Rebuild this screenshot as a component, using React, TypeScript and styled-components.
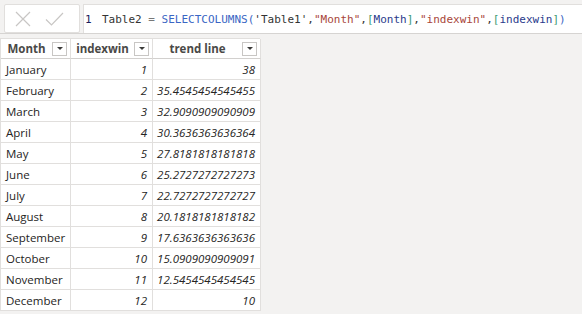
import React from "react";
import styled, { createGlobalStyle } from "styled-components";

const Global = createGlobalStyle`
  html, body { margin: 0; padding: 0; background: #f3f2f1; }
  body { width: 582px; height: 314px; overflow: hidden; font-family: "Open Sans", "Noto Sans", sans-serif; }
`;

const Page = styled.div`
  display: flex;
  flex-direction: column;
  gap: 4px;
`;

const FormulaBar = styled.div`
  display: flex;
  gap: 3px;
  padding: 4px 0 0 4px;
  height: 29px;
  border-bottom: 1px solid #d6d4d2;
`;

const ActionBox = styled.div`
  width: 64px;
  height: 27px;
  background: #fff;
  border: 1px solid #e1dfdd;
  border-radius: 2px;
  display: flex;
  align-items: center;
  gap: 14px;
  padding: 0 0 0 10px;
  box-sizing: content-box;
`;

const Editor = styled.div`
  flex: 1;
  height: 28px;
  background: #fff;
  border: 1px solid #e1dfdd;
  border-right: none;
  border-bottom: none;
  display: flex;
  align-items: center;
  font-family: "DejaVu Sans Mono", "Liberation Mono", monospace;
  font-size: 11px;
  color: #222;
  white-space: pre;
`;

const LineNo = styled.span`
  width: 17px;
  padding-left: 1px;
  color: #1c1c5c;
`;

const Tok = styled.span<{ $c: string }>`
  color: ${(p) => p.$c};
`;

const Table = styled.div`
  display: grid;
  grid-template-columns: 70px 82px 108px;
  width: 260px;
  background: #fff;
  border-left: 1px solid #e1dfdd;
  border-top: 1px solid #e1dfdd;
  box-sizing: border-box;
`;

const HeadCell = styled.div`
  height: 20px;
  display: flex;
  align-items: center;
  padding-right: 3px;
  border-right: 1px solid #e1dfdd;
  border-bottom: 1px solid #d2d0ce;
  box-sizing: border-box;
`;

const HeadText = styled.span`
  flex: 1;
  text-align: center;
  font-weight: 700;
  font-size: 11.5px;
  color: #4a4947;
  white-space: nowrap;
`;

const DropBtn = styled.span`
  width: 13px;
  height: 12px;
  border: 1px solid #c8c6c4;
  background: #fff;
  display: flex;
  align-items: center;
  justify-content: center;
  &::after {
    content: "";
    border-left: 3px solid transparent;
    border-right: 3px solid transparent;
    border-top: 3px solid #3b3a39;
  }
`;

const Cell = styled.div<{ $num?: boolean }>`
  height: 21px;
  display: flex;
  align-items: center;
  justify-content: ${(p) => (p.$num ? "flex-end" : "flex-start")};
  padding: ${(p) => (p.$num ? "0 5px 0 0" : "0 0 0 5px")};
  font-size: 11.5px;
  font-style: ${(p) => (p.$num ? "italic" : "normal")};
  color: #252423;
  border-right: 1px solid #e1dfdd;
  border-bottom: 1px solid #e1dfdd;
  box-sizing: border-box;
  white-space: nowrap;
`;

const rows: [string, number, string][] = [
  ["January", 1, "38"],
  ["February", 2, "35.4545454545455"],
  ["March", 3, "32.9090909090909"],
  ["April", 4, "30.3636363636364"],
  ["May", 5, "27.8181818181818"],
  ["June", 6, "25.2727272727273"],
  ["July", 7, "22.7272727272727"],
  ["August", 8, "20.1818181818182"],
  ["September", 9, "17.6363636363636"],
  ["October", 10, "15.0909090909091"],
  ["November", 11, "12.5454545454545"],
  ["December", 12, "10"],
];

const KW = "#3a66c4";
const STR = "#a8453a";
const BR = "#3c9a74";
const COL = "#2a3a8c";
const PL = "#333";

export default function App() {
  return (
    <Page>
      <Global />
      <FormulaBar>
        <ActionBox>
          <svg width="16" height="16" viewBox="0 0 16 16">
            <path d="M1 1 L15 15 M15 1 L1 15" stroke="#c8c6c4" strokeWidth="1.2" fill="none" />
          </svg>
          <svg width="19" height="14" viewBox="0 0 19 14">
            <path d="M1 7.5 L6.5 13 L18 1" stroke="#c8c6c4" strokeWidth="1.2" fill="none" />
          </svg>
        </ActionBox>
        <Editor>
          <LineNo>1</LineNo>
          <Tok $c={PL}>Table2 </Tok>
          <Tok $c="#777">=</Tok>
          <Tok $c={KW}> SELECTCOLUMNS(</Tok>
          <Tok $c={PL}>'Table1'</Tok>
          <Tok $c={PL}>,</Tok>
          <Tok $c={STR}>"Month"</Tok>
          <Tok $c={PL}>,</Tok>
          <Tok $c={BR}>[</Tok>
          <Tok $c={COL}>Month</Tok>
          <Tok $c={BR}>]</Tok>
          <Tok $c={PL}>,</Tok>
          <Tok $c={STR}>"indexwin"</Tok>
          <Tok $c={PL}>,</Tok>
          <Tok $c={BR}>[</Tok>
          <Tok $c={COL}>indexwin</Tok>
          <Tok $c={BR}>]</Tok>
          <Tok $c={KW}>)</Tok>
        </Editor>
      </FormulaBar>
      <Table>
        <HeadCell>
          <HeadText>Month</HeadText>
          <DropBtn />
        </HeadCell>
        <HeadCell>
          <HeadText>indexwin</HeadText>
          <DropBtn />
        </HeadCell>
        <HeadCell>
          <HeadText>trend line</HeadText>
          <DropBtn />
        </HeadCell>
        {rows.map(([m, i, t]) => (
          <React.Fragment key={m}>
            <Cell>{m}</Cell>
            <Cell $num>{i}</Cell>
            <Cell $num>{t}</Cell>
          </React.Fragment>
        ))}
      </Table>
    </Page>
  );
}
